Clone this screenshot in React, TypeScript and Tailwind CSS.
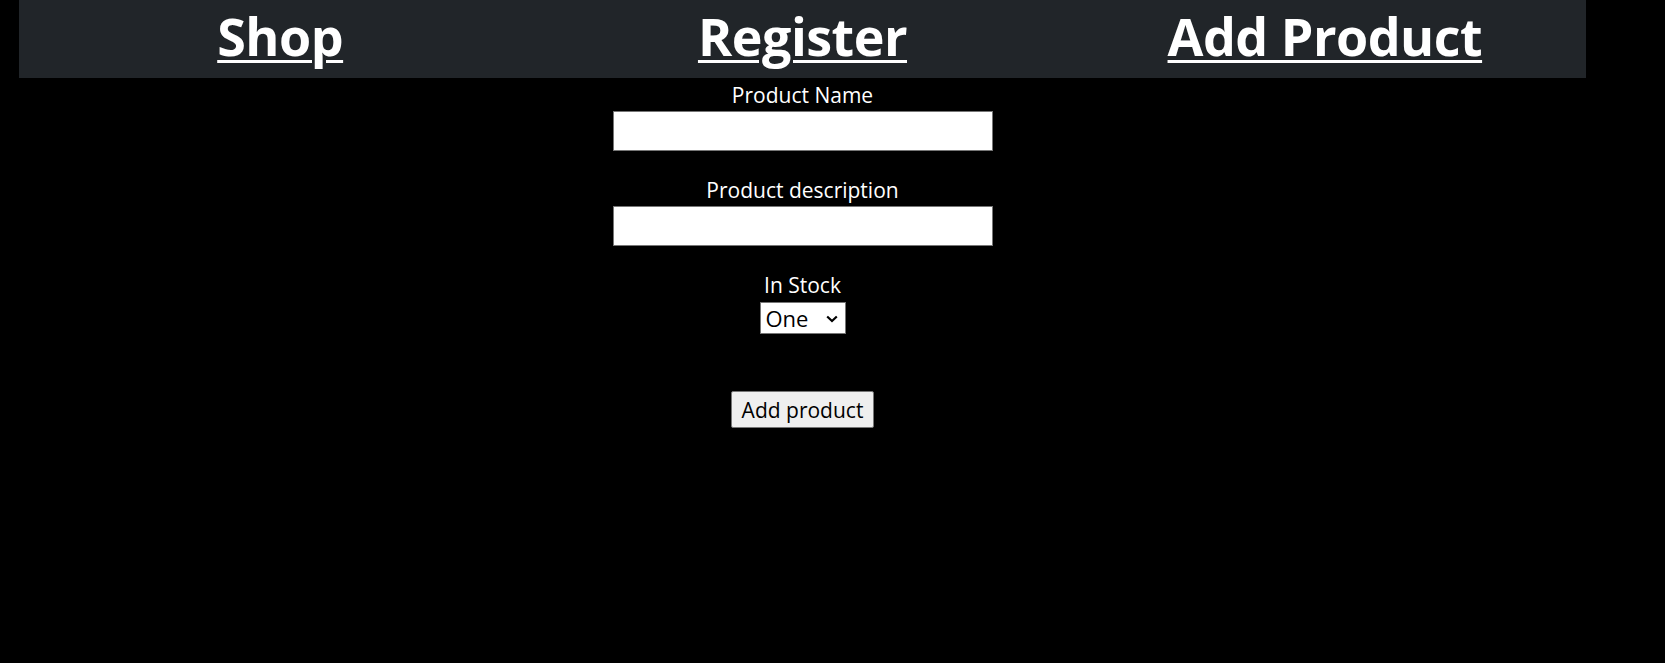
import { useState } from "react";

const links = ["Shop", "Register", "Add Product"];

const App = () => {
  const [name, setName] = useState("");
  const [desc, setDesc] = useState("");
  const [stock, setStock] = useState("one");

  return (
    <div className="min-h-screen bg-black text-white font-['Open_Sans',sans-serif]">
      <div className="ml-[19px] w-[1567px]">
        <nav className="h-[78px] bg-[#212529] grid grid-cols-3 overflow-hidden">
          {links.map((link) => (
            <div key={link} className="flex justify-center">
              <a
                href="#"
                className="text-[52px] font-bold leading-[72px] tracking-[-0.5px] text-white underline decoration-[3px] underline-offset-[4px]"
              >
                {link}
              </a>
            </div>
          ))}
        </nav>

        <form
          className="flex flex-col items-center pt-[3px]"
          onSubmit={(e) => e.preventDefault()}
        >
          <label htmlFor="name" className="text-[21px] leading-[28px]">
            Product Name
          </label>
          <input
            id="name"
            type="text"
            value={name}
            onChange={(e) => setName(e.target.value)}
            className="mt-[2px] h-[40px] w-[380px] border border-[#767676] bg-white px-2 text-[21px] text-black outline-none"
          />

          <label htmlFor="desc" className="mt-[25px] text-[21px] leading-[28px]">
            Product description
          </label>
          <input
            id="desc"
            type="text"
            value={desc}
            onChange={(e) => setDesc(e.target.value)}
            className="mt-[2px] h-[40px] w-[380px] border border-[#767676] bg-white px-2 text-[21px] text-black outline-none"
          />

          <label htmlFor="stock" className="mt-[25px] text-[21px] leading-[28px]">
            In Stock
          </label>
          <div className="relative mt-[3px]">
            <select
              id="stock"
              value={stock}
              onChange={(e) => setStock(e.target.value)}
              className="h-[32px] w-[86px] appearance-none border border-[#767676] bg-white pl-[5px] text-[22px] leading-[28px] text-black outline-none"
            >
              <option value="one">One</option>
              <option value="two">Two</option>
              <option value="three">Three</option>
            </select>
            <svg
              className="pointer-events-none absolute right-[8px] top-[13px]"
              width="12"
              height="8"
              viewBox="0 0 12 8"
              fill="none"
            >
              <path d="M1.2 1.5L6 6L10.8 1.5" stroke="#000" strokeWidth="2.2" />
            </svg>
          </div>

          <button
            type="submit"
            className="mt-[57px] h-[37px] rounded-[2px] border border-[#767676] bg-[#efefef] px-[10px] text-[21px] leading-[28px] text-black"
          >
            Add product
          </button>
        </form>
      </div>
    </div>
  );
};

export default App;
